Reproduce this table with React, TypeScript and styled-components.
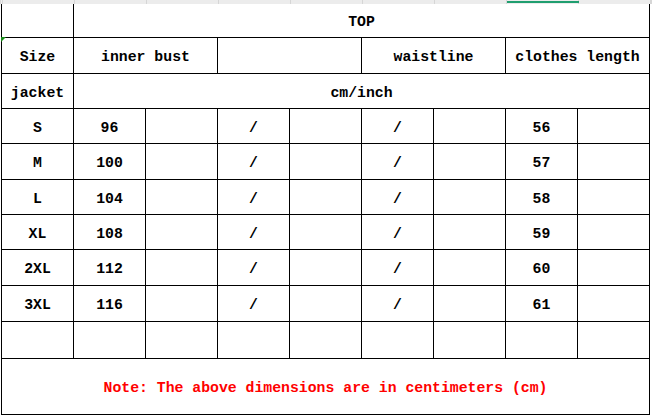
import React from 'react'
import styled, { createGlobalStyle } from 'styled-components'

const GlobalStyle = createGlobalStyle`
    html, body {
        margin: 0;
        padding: 0;
        background: #ffffff;
    }
`

const COLS = 9

const Page = styled.div`
    width: 652px;
    height: 416px;
    overflow: hidden;
    background: #ffffff;
`

const HeaderStrip = styled.div`
    display: grid;
    grid-template-columns: 1px repeat(${COLS}, 71px);
    column-gap: 1px;
    height: 4px;
    background: #d6d6d6;
    padding-left: 1px;
`

const StripCell = styled.div<{ active?: boolean }>`
    background: #ececec;
    height: 4px;
    position: relative;
    &::after {
        content: '';
        display: ${(p) => (p.active ? 'block' : 'none')};
        position: absolute;
        left: 0;
        right: -1px;
        top: 1px;
        height: 2px;
        background: #1f9e6f;
    }
`

const Sheet = styled.div`
    display: grid;
    grid-template-columns: repeat(${COLS}, 71px);
    grid-template-rows: 33px 35px 34px 34px 35px 34px 34px 35px 35px 36px 55px;
    gap: 1px;
    width: fit-content;
    margin-left: 1px;
    padding: 0 1px 1px 1px;
    background: #000000;
`

const Cell = styled.div<{ span?: number; red?: boolean; marked?: boolean }>`
    grid-column: span ${(p) => p.span ?? 1};
    background: #ffffff;
    display: flex;
    align-items: center;
    justify-content: center;
    padding-top: 3px;
    box-sizing: border-box;
    position: relative;
    font-family: "Liberation Mono", "DejaVu Sans Mono", monospace;
    font-weight: bold;
    font-size: 14.8px;
    color: ${(p) => (p.red ? '#ff0000' : '#000000')};
    white-space: pre;
    &::before {
        content: '';
        display: ${(p) => (p.marked ? 'block' : 'none')};
        position: absolute;
        left: -1px;
        top: -1px;
        width: 0;
        height: 0;
        border-top: 5px solid #1a8c1a;
        border-right: 5px solid transparent;
    }
`

const sizes = [
    { size: 'S', bust: '96', length: '56' },
    { size: 'M', bust: '100', length: '57' },
    { size: 'L', bust: '104', length: '58' },
    { size: 'XL', bust: '108', length: '59' },
    { size: '2XL', bust: '112', length: '60' },
    { size: '3XL', bust: '116', length: '61' },
]

const App = () => {
    return (
        <Page>
            <GlobalStyle />
            <HeaderStrip>
                <StripCell />
                {Array.from({ length: COLS }).map((_, i) => (
                    <StripCell key={i} active={i === 7} />
                ))}
            </HeaderStrip>
            <Sheet>
                <Cell />
                <Cell span={8}>TOP</Cell>

                <Cell marked>Size</Cell>
                <Cell span={2}>inner bust</Cell>
                <Cell span={2} />
                <Cell span={2}>waistline</Cell>
                <Cell span={2}>clothes length</Cell>

                <Cell>jacket</Cell>
                <Cell span={8}>cm/inch</Cell>

                {sizes.map((row) => (
                    <React.Fragment key={row.size}>
                        <Cell>{row.size}</Cell>
                        <Cell>{row.bust}</Cell>
                        <Cell />
                        <Cell>/</Cell>
                        <Cell />
                        <Cell>/</Cell>
                        <Cell />
                        <Cell>{row.length}</Cell>
                        <Cell />
                    </React.Fragment>
                ))}

                {Array.from({ length: COLS }).map((_, i) => (
                    <Cell key={'blank' + i} />
                ))}

                <Cell span={9} red>Note: The above dimensions are in centimeters (cm)</Cell>
            </Sheet>
        </Page>
    )
}

export default App
